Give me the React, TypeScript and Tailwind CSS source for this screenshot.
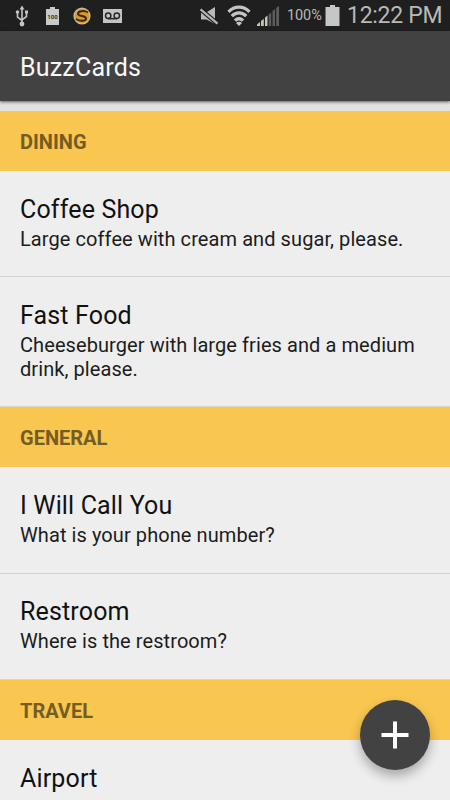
interface Card {
    readonly title: string;
    readonly message?: string;
}

interface Section {
    readonly name: string;
    readonly cards: Card[];
}

const SECTIONS: Section[] = [
    {
        name: 'DINING',
        cards: [
            { title: 'Coffee Shop', message: 'Large coffee with cream and sugar, please.' },
            { title: 'Fast Food', message: 'Cheeseburger with large fries and a medium drink, please.' },
        ],
    },
    {
        name: 'GENERAL',
        cards: [
            { title: 'I Will Call You', message: 'What is your phone number?' },
            { title: 'Restroom', message: 'Where is the restroom?' },
        ],
    },
    {
        name: 'TRAVEL',
        cards: [{ title: 'Airport' }],
    },
];

function UsbIcon() {
    return (
        <svg className="w-[14px] h-[22px]" viewBox="0 0 14 22" fill="none" stroke="#c4c4c4" strokeWidth="1.6">
            <path d="M7 3v16M2.5 8v4.2L7 15.5M11.5 7v4.500L7 14.800" />
            <path d="M7 0.5L4.500 4.5h5zM10 5.500h3v3h-3z" fill="#c4c4c4" stroke="none" />
            <circle cx="2.500" cy="7" r="1.8" fill="#c4c4c4" stroke="none" />
            <circle cx="7" cy="19" r="2.4" fill="#c4c4c4" stroke="none" />
        </svg>
    );
}

function BatteryLevelIcon() {
    return (
        <svg className="w-[13px] h-[18px]" viewBox="0 0 13 18">
            <path d="M4 0h5v2h4v16H0V2h4z" fill="#c9c9c9" />
            <text x="6.5" y="12" fontSize="6" fontWeight="700" fontFamily="Roboto, sans-serif" textAnchor="middle" fill="#333">100</text>
        </svg>
    );
}

function SwirlIcon() {
    return (
        <svg className="w-[18px] h-[18px]" viewBox="0 0 18 18" fill="none">
            <circle cx="9" cy="9" r="8.6" fill="#cdb98e" />
            <circle cx="9" cy="9" r="7.2" fill="#d89c2e" />
            <path d="M15 5.500C12 3.500 5 3.500 5 6.800c0 2.800 8 1.800 8 4.600 0 3-6.500 3-10 .6" stroke="#3b2b16" strokeWidth="2" />
        </svg>
    );
}

function VoicemailIcon() {
    return (
        <svg className="w-[19px] h-[14px]" viewBox="0 0 19 14" fill="none">
            <path d="M0 0h19v14H0z" fill="#c4c4c4" />
            <g stroke="#262626" strokeWidth="1.500">
                <circle cx="5.200" cy="6.800" r="2.700" />
                <circle cx="13.800" cy="6.800" r="2.700" />
                <path d="M5 9.700h9" />
            </g>
        </svg>
    );
}

function MutedIcon() {
    return (
        <svg className="w-[19px] h-[18px]" viewBox="0 0 19 18">
            <path d="M1 5h6l8-5v17L6.500 12.500H1z" fill="#b9b9b9" />
            <path d="M-1 1l20 17" stroke="#1f1f1f" strokeWidth="4.400" />
            <path d="M0.500 2.300l17 14.400" stroke="#b9b9b9" strokeWidth="2.200" />
        </svg>
    );
}

function WifiIcon() {
    return (
        <svg className="w-[24px] h-[21px]" viewBox="0 0 24 21" fill="none" stroke="#c4c4c4" strokeWidth="3.300">
            <path d="M1.500 6.800c6-6.300 15-6.300 21 0M4.800 11.200c4.200-4.300 10.200-4.300 14.400 0M8 15.600c2.400-2.500 5.600-2.500 8 0" />
            <path d="M12 21l-3-3c1.600-1.600 4.400-1.600 6 0z" fill="#c4c4c4" stroke="none" />
        </svg>
    );
}

function SignalIcon() {
    return (
        <svg className="w-[22px] h-[20px]" viewBox="0 0 22 20">
            <path d="M0 20v-1.500l3-2.500v4zM4 20v-5l2.800-2.300V20zM8 20v-8.500l2.500-2V20z" fill="#c9c4b4" />
            <path d="M11.700 20V8.500l2.500-2V20zM15.500 20V5l2.500-2v17zM19.200 20V1.800L22 0v20z" fill="#5c5c5c" />
        </svg>
    );
}

function BatteryIcon() {
    return (
        <svg className="w-[15px] h-[21px]" viewBox="0 0 15 21">
            <path d="M5 0h5v2h4.500v19H0.500V2H5z" fill="#c6c6c6" />
        </svg>
    );
}

function StatusBar() {
    return (
        <div className="flex h-[31px] shrink-0 items-center bg-[#1f1f1f] pl-[15px] pr-[9px] text-[#b8b8b8]">
            <UsbIcon />
            <div className="ml-[17px]"><BatteryLevelIcon /></div>
            <div className="ml-[14px]"><SwirlIcon /></div>
            <div className="ml-[12px]"><VoicemailIcon /></div>
            <div className="ml-auto flex items-center">
                <MutedIcon />
                <div className="ml-[8px]"><WifiIcon /></div>
                <div className="ml-[6px]"><SignalIcon /></div>
                <span className="ml-[8px] w-[35px] whitespace-nowrap pt-px text-[14.500px] tracking-[-0.1px]">100%</span>
                <div className="ml-[3px]"><BatteryIcon /></div>
                <span className="ml-[7px] w-[94px] whitespace-nowrap text-[23px] leading-[30px] tracking-[-0.3px]">12:22 PM</span>
            </div>
        </div>
    );
}

function CardRow({ title, message }: Card) {
    return (
        <li className="border-b border-[#d2d2d2] pb-[24.750px] pl-5 pr-[30px] pt-[23.750px] last:border-b-[#d8d5cc]">
            <h3 className="text-[25px] leading-[30px] tracking-[0.15px] text-[#111]">{title}</h3>
            {message && (
                <p className="mt-[3px] text-[20px] leading-[23.750px] tracking-[0.08px] text-[#1c1c1c]">{message}</p>
            )}
        </li>
    );
}

function App() {
    return (
        <div className="relative flex h-[800px] w-[450px] flex-col overflow-hidden bg-[#eeeeee] font-['Roboto',sans-serif]">
            <StatusBar />
            <header className="z-10 flex h-[70px] shrink-0 items-center bg-[#424242] pl-5 pt-[3px] shadow-[0_1px_3px_rgba(0,0,0,0.6)]">
                <h1 className="text-[25px] leading-[30px] tracking-[0.2px] text-[#f7f7f7]">BuzzCards</h1>
            </header>
            <main className="bg-[linear-gradient(#e2e2e2_10px,transparent_10px)] pt-[10px]">
                {SECTIONS.map((section) => (
                    <section key={section.name}>
                        <h2 className="flex h-[60px] items-center bg-[#f9c650] pl-5 pt-[2px] text-[20px] font-bold text-[#745c25]">
                            {section.name}
                        </h2>
                        <ul>
                            {section.cards.map((card) => (
                                <CardRow key={card.title} {...card} />
                            ))}
                        </ul>
                    </section>
                ))}
            </main>
            {/* Floating add button */}
            <button
                type="button"
                aria-label="Add"
                className="absolute bottom-[30px] right-5 flex h-[70px] w-[70px] items-center justify-center rounded-full bg-[#424242] shadow-[0_6px_12px_rgba(0,0,0,0.3)]"
            >
                <svg className="h-[28px] w-[28px]" viewBox="0 0 28 28" stroke="#fff" strokeWidth="4">
                    <path d="M14 0.500v27M0.500 14h27" />
                </svg>
            </button>
        </div>
    );
}

export default App;
